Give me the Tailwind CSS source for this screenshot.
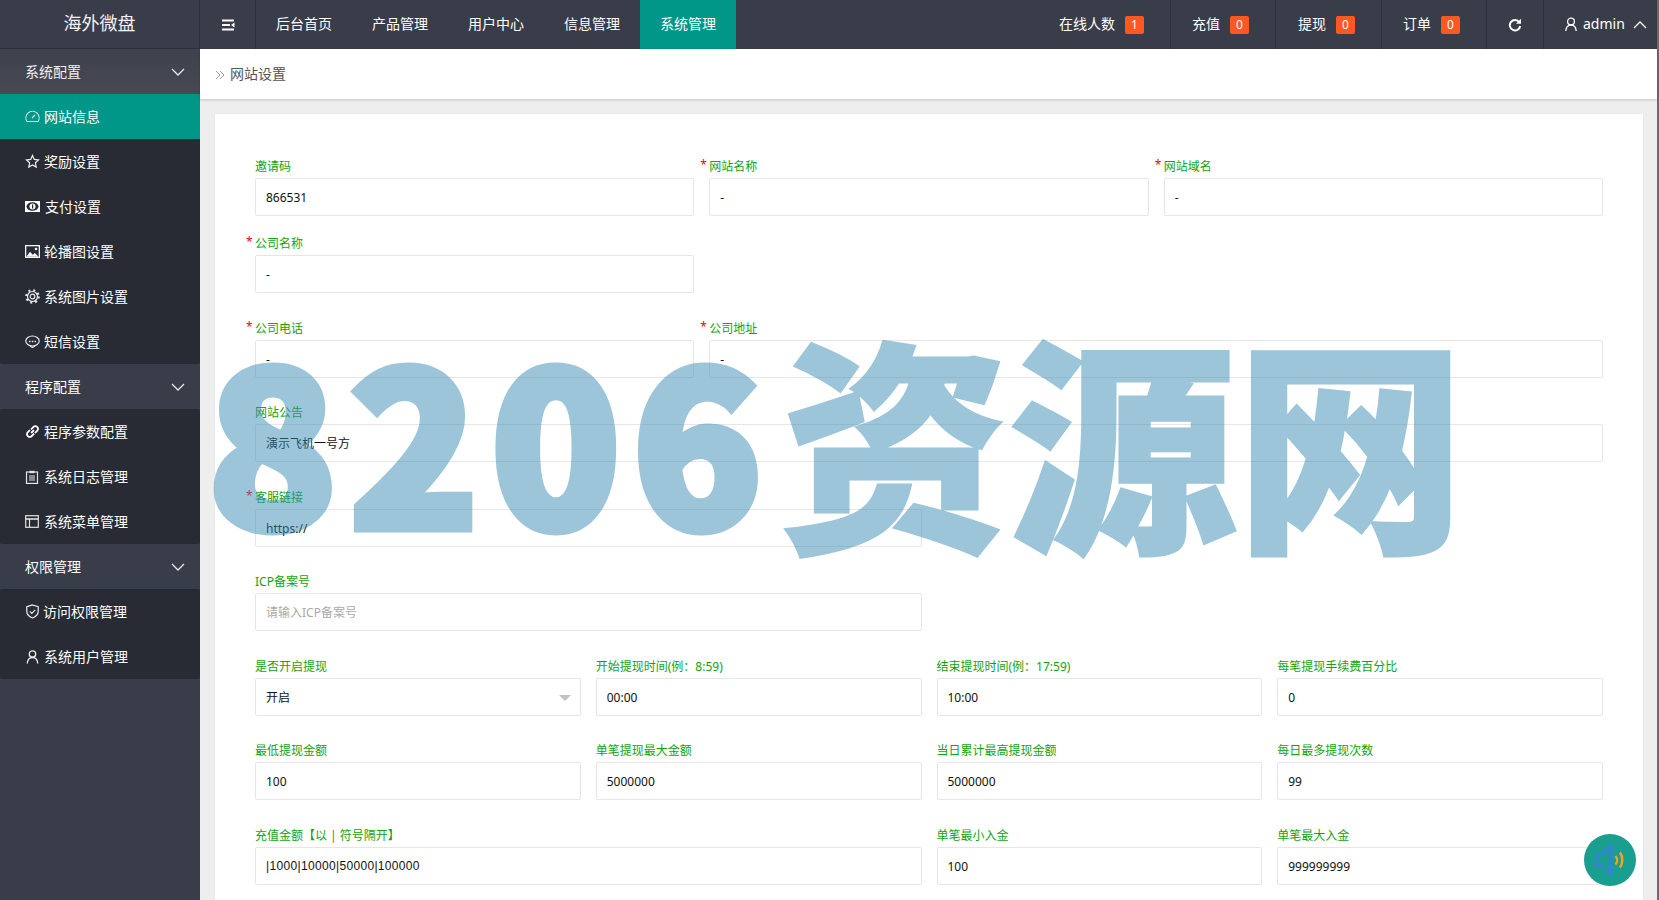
<!DOCTYPE html>
<html lang="zh">
<head>
<meta charset="utf-8">
<title>网站设置</title>
<script src="https://cdn.jsdelivr.net/npm/@tailwindcss/browser@4"></script>
</head>
<body class="m-0 bg-[#eeeeee]">
<div class="relative flex w-[1659px] h-[900px] overflow-hidden font-['Noto_Sans','Noto_Sans_CJK_SC',sans-serif] text-[14px]">
  <div class="flex flex-col w-[1657px] h-full">
    <!-- top bar -->
    <header class="flex h-[49px] shrink-0 bg-[#393d49] text-white">
      <div class="w-[200px] shrink-0 border-r border-b border-[#2e313b] flex items-center justify-center pb-[2px] text-[18px] text-[#f2f2f2]">海外微盘</div>
      <div class="w-[56px] shrink-0 border-r border-[#2e313b] flex items-center justify-center">
        <svg width="14" height="12" viewBox="0 0 14 12" fill="none" stroke="#fff" stroke-width="2"><path d="M1 1.500h12M1 10.500h12M1 6h8"/><path d="M13.500 3.500l-3.500 2.500 3.500 2.500z" stroke="none" fill="#fff"/></svg>
      </div>
      <nav class="flex">
        <a class="w-[96px] flex items-center justify-center pb-[2px]">后台首页</a>
        <a class="w-[96px] flex items-center justify-center pb-[2px]">产品管理</a>
        <a class="w-[96px] flex items-center justify-center pb-[2px]">用户中心</a>
        <a class="w-[96px] flex items-center justify-center pb-[2px]">信息管理</a>
        <a class="w-[96px] flex items-center justify-center pb-[2px] bg-[#009688]">系统管理</a>
      </nav>
      <div class="ml-auto flex">
        <div class="w-[133px] border-r border-[#2e313b] flex items-center pl-[21px] gap-[10px]"><span class="mb-[2px]">在线人数</span><span class="w-[19px] h-[18px] rounded-[2px] bg-[#ff5722] text-[12px] flex items-center justify-center">1</span></div>
        <div class="w-[105px] border-r border-[#2e313b] flex items-center pl-[21px] gap-[10px]"><span class="mb-[2px]">充值</span><span class="w-[19px] h-[18px] rounded-[2px] bg-[#ff5722] text-[12px] flex items-center justify-center">0</span></div>
        <div class="w-[106px] border-r border-[#2e313b] flex items-center pl-[22px] gap-[10px]"><span class="mb-[2px]">提现</span><span class="w-[19px] h-[18px] rounded-[2px] bg-[#ff5722] text-[12px] flex items-center justify-center">0</span></div>
        <div class="w-[105px] border-r border-[#2e313b] flex items-center pl-[21px] gap-[10px]"><span class="mb-[2px]">订单</span><span class="w-[19px] h-[18px] rounded-[2px] bg-[#ff5722] text-[12px] flex items-center justify-center">0</span></div>
        <div class="w-[57px] border-r border-[#2e313b] flex items-center justify-center">
          <svg width="14" height="14" viewBox="0 0 14 14" fill="none"><path d="M11.300 4.200A5.200 5.200 0 1 0 12.200 8" stroke="#fff" stroke-width="2"/><path d="M13 .8v5H8z" fill="#fff"/></svg>
        </div>
        <div class="w-[113px] flex items-center pl-[20px]">
          <svg width="14" height="15" viewBox="0 0 14 15" fill="none" stroke="#fff" stroke-width="1.3"><circle cx="7" cy="4.500" r="3.400"/><path d="M1.800 14c.3-3.600 2.200-6 5.200-6s4.900 2.400 5.200 6"/></svg>
          <span class="ml-[5px] mb-[2px]">admin</span>
          <svg class="ml-[8px]" width="14" height="8" viewBox="0 0 14 8" fill="none" stroke="#fff" stroke-width="1.3"><path d="M1 7l6-6 6 6"/></svg>
        </div>
      </div>
    </header>
    <div class="flex flex-1 min-h-0">
      <!-- sidebar -->
      <aside class="w-[200px] shrink-0 bg-[#393d49] text-white">
        <div class="h-[45px] pl-[25px] pr-[15px] flex items-center justify-between bg-gradient-to-b from-[#3f424e] to-[#464953] text-[#f0f0f0]">系统配置
          <svg width="14" height="8" viewBox="0 0 14 8" fill="none" stroke="#e8e8e8" stroke-width="1.3"><path d="M1 1l6 6 6-6"/></svg>
        </div>
        <div class="bg-[#282b33] rounded-[2px]">
          <div class="h-[45px] pl-[25px] flex items-center gap-[4px] bg-[#009688]">
            <svg width="15" height="13" viewBox="0 0 15 13" fill="none" stroke="#d7eeeb" stroke-width="1.1"><path d="M2 11.500A6.600 6.600 0 1 1 13 11.500z"/><path d="M7 8l3-3" stroke-width="1.300"/></svg>网站信息
          </div>
          <div class="h-[45px] pl-[25px] flex items-center gap-[4px]">
            <svg width="15" height="15" viewBox="0 0 15 15" fill="none" stroke="#f2f2f2" stroke-width="1.200"><path d="M7.500 1.500l1.800 3.900 4.200.5-3.100 2.900.8 4.200-3.700-2.100-3.700 2.100.8-4.200L1.500 5.900l4.200-.5z"/></svg>奖励设置
          </div>
          <div class="h-[45px] pl-[25px] flex items-center gap-[5px]">
            <svg width="15" height="11" viewBox="0 0 15 11"><rect width="15" height="11" fill="#fff"/><ellipse cx="7.500" cy="5.500" rx="6" ry="4.300" fill="#282b33"/><circle cx="7.500" cy="5.500" r="3" fill="#fff"/><rect x="7" y="3.500" width="1.200" height="4" fill="#282b33"/></svg>支付设置
          </div>
          <div class="h-[45px] pl-[25px] flex items-center gap-[4px]">
            <svg width="15" height="13" viewBox="0 0 15 13"><rect width="15" height="13" fill="#f5f5f5"/><rect x="1.300" y="1.300" width="12.400" height="10.400" fill="#282b33"/><path d="M1.300 11.700l3.700-5 2.800 3 2-1.800 3.900 3.800z" fill="#f5f5f5"/><circle cx="11" cy="4" r="1.300" fill="#f5f5f5"/></svg>轮播图设置
          </div>
          <div class="h-[45px] pl-[25px] flex items-center gap-[4px]">
            <svg width="15" height="15" viewBox="0 0 15 15" fill="none" stroke="#e8ecf2"><circle cx="7.500" cy="7.500" r="2.300" stroke-width="1.200"/><circle cx="7.500" cy="7.500" r="5" stroke-width="1.200"/><circle cx="7.500" cy="7.500" r="6.300" stroke-width="2" stroke-dasharray="2 2.950"/></svg>系统图片设置
          </div>
          <div class="h-[45px] pl-[25px] flex items-center gap-[4px]">
            <svg width="15" height="13" viewBox="0 0 15 13" fill="none" stroke="#e8ecf2" stroke-width="1.200"><ellipse cx="7.500" cy="6" rx="6.700" ry="5"/><path d="M5 11l2.500 1.500L10 11"/><path d="M4 6.500h7" stroke-dasharray="1.500 1.300" stroke-width="1.600"/></svg>短信设置
          </div>
        </div>
        <div class="h-[45px] pl-[25px] pr-[15px] flex items-center justify-between">程序配置
          <svg width="14" height="8" viewBox="0 0 14 8" fill="none" stroke="#e8e8e8" stroke-width="1.3"><path d="M1 1l6 6 6-6"/></svg>
        </div>
        <div class="bg-[#282b33] rounded-[2px]">
          <div class="h-[45px] pl-[25px] flex items-center gap-[4px]">
            <svg width="15" height="15" viewBox="0 0 15 15" fill="none" stroke="#fff" stroke-width="1.800"><path d="M6.200 9l2.800-2.900"/><path d="M6 5.500l2.500-2.700a2.700 2.700 0 0 1 3.800 3.800L10 9"/><path d="M9.200 9.700l-2.700 2.500a2.700 2.700 0 0 1-3.800-3.800L5 6"/></svg>程序参数配置
          </div>
          <div class="h-[45px] pl-[25px] flex items-center gap-[5px]">
            <svg width="14" height="14" viewBox="0 0 14 14" fill="none" stroke="#dfe6ee" stroke-width="1.200"><rect x="1.500" y="2" width="11" height="11.400"/><rect x="4.500" y=".8" width="5" height="2.400" fill="#dfe6ee" stroke="none"/><path d="M4 6h6M4 8h6M4 10h6"/></svg>系统日志管理
          </div>
          <div class="h-[45px] pl-[25px] flex items-center gap-[5px]">
            <svg width="14" height="13" viewBox="0 0 14 13" fill="none" stroke="#e2e2e2" stroke-width="1.200"><rect x=".7" y=".7" width="12.600" height="11.600"/><path d="M.7 4h12.600" stroke-width="1.600"/><path d="M4.500 4v8"/></svg>系统菜单管理
          </div>
        </div>
        <div class="h-[45px] pl-[25px] pr-[15px] flex items-center justify-between">权限管理
          <svg width="14" height="8" viewBox="0 0 14 8" fill="none" stroke="#e8e8e8" stroke-width="1.3"><path d="M1 1l6 6 6-6"/></svg>
        </div>
        <div class="bg-[#282b33] rounded-[2px]">
          <div class="h-[45px] pl-[25px] flex items-center gap-[3px]">
            <svg width="15" height="15" viewBox="0 0 15 15" fill="none" stroke="#eef2f5" stroke-width="1.200"><path d="M7.500 1l5.700 1.800v4.500c0 3.300-2.600 5.500-5.700 6.700-3.100-1.200-5.700-3.400-5.700-6.700V2.800z"/><path d="M4.800 7.300l2 2 3.500-3.500"/></svg>访问权限管理
          </div>
          <div class="h-[45px] pl-[26px] flex items-center gap-[5px]">
            <svg width="13" height="14" viewBox="0 0 13 14" fill="none" stroke="#eef2f5" stroke-width="1.300"><circle cx="6.500" cy="4" r="3.200"/><path d="M1.200 13.500c.3-3.600 2.300-6 5.300-6s5 2.400 5.300 6"/></svg>系统用户管理
          </div>
        </div>
      </aside>
      <!-- main -->
      <main class="flex-1 min-w-0 flex flex-col">
        <div class="relative h-[50px] shrink-0 bg-white shadow-[0_1px_3px_rgba(0,0,0,0.18)] flex items-center pl-[15px] text-[#555]">
          <span class="mb-[1px] flex items-center gap-[5px]">
            <svg class="mt-[2px]" width="10" height="10" viewBox="0 0 10 10" fill="none" stroke="#999" stroke-width="1"><path d="M1 1l4 4-4 4M5 1l4 4-4 4"/></svg>网站设置
          </span>
        </div>
        <div class="flex-1 min-h-0 pt-[15px] pl-[15px] pr-[14px]">
          <section class="h-full bg-white shadow-[0_0_2px_rgba(0,0,0,0.06)] px-[40px] pt-[43px] text-[12px]">
            <div class="grid grid-cols-12 gap-x-[15px] mb-[18px]">
              <div class="col-span-4"><label class="block relative h-[21px] leading-[19px] text-[#0fa50f]">邀请码</label><input value="866531" class="block w-full h-[38px] border border-[#e6e6e6] rounded-[2px] pl-[10px] text-[#111] outline-none"></div>
              <div class="col-span-4"><label class="block relative h-[21px] leading-[19px] text-[#0fa50f]"><i class="absolute left-[-9px] top-[-2px] not-italic text-[#f00]">*</i>网站名称</label><input value="-" class="block w-full h-[38px] border border-[#e6e6e6] rounded-[2px] pl-[10px] text-[#111] outline-none"></div>
              <div class="col-span-4"><label class="block relative h-[21px] leading-[19px] text-[#0fa50f]"><i class="absolute left-[-9px] top-[-2px] not-italic text-[#f00]">*</i>网站域名</label><input value="-" class="block w-full h-[38px] border border-[#e6e6e6] rounded-[2px] pl-[10px] text-[#111] outline-none"></div>
            </div>
            <div class="grid grid-cols-12 gap-x-[15px] mb-[26px]">
              <div class="col-span-4"><label class="block relative h-[21px] leading-[19px] text-[#0fa50f]"><i class="absolute left-[-9px] top-[-2px] not-italic text-[#f00]">*</i>公司名称</label><input value="-" class="block w-full h-[38px] border border-[#e6e6e6] rounded-[2px] pl-[10px] text-[#111] outline-none"></div>
            </div>
            <div class="grid grid-cols-12 gap-x-[15px] mb-[25px]">
              <div class="col-span-4"><label class="block relative h-[21px] leading-[19px] text-[#0fa50f]"><i class="absolute left-[-9px] top-[-2px] not-italic text-[#f00]">*</i>公司电话</label><input value="-" class="block w-full h-[38px] border border-[#e6e6e6] rounded-[2px] pl-[10px] text-[#111] outline-none"></div>
              <div class="col-span-8"><label class="block relative h-[21px] leading-[19px] text-[#0fa50f]"><i class="absolute left-[-9px] top-[-2px] not-italic text-[#f00]">*</i>公司地址</label><input value="-" class="block w-full h-[38px] border border-[#e6e6e6] rounded-[2px] pl-[10px] text-[#111] outline-none"></div>
            </div>
            <div class="grid grid-cols-12 gap-x-[15px] mb-[26px]">
              <div class="col-span-12"><label class="block relative h-[21px] leading-[19px] text-[#0fa50f]">网站公告</label><input value="演示飞机一号方" class="block w-full h-[38px] border border-[#e6e6e6] rounded-[2px] pl-[10px] text-[#111] outline-none"></div>
            </div>
            <div class="grid grid-cols-12 gap-x-[15px] mb-[25px]">
              <div class="col-span-6"><label class="block relative h-[21px] leading-[19px] text-[#0fa50f]"><i class="absolute left-[-9px] top-[-2px] not-italic text-[#f00]">*</i>客服链接</label><input value="https://" class="block w-full h-[38px] border border-[#e6e6e6] rounded-[2px] pl-[10px] text-[#111] outline-none"></div>
            </div>
            <div class="grid grid-cols-12 gap-x-[15px] mb-[26px]">
              <div class="col-span-6"><label class="block relative h-[21px] leading-[19px] text-[#0fa50f]">ICP备案号</label><input placeholder="请输入ICP备案号" class="block w-full h-[38px] border border-[#e6e6e6] rounded-[2px] pl-[10px] text-[#111] outline-none placeholder:text-[#aaa]"></div>
            </div>
            <div class="grid grid-cols-12 gap-x-[15px] mb-[25px]">
              <div class="col-span-3"><label class="block relative h-[21px] leading-[19px] text-[#0fa50f]">是否开启提现</label><div class="relative"><input value="开启" class="block w-full h-[38px] border border-[#e6e6e6] rounded-[2px] pl-[10px] text-[#111] outline-none"><span class="absolute right-[10px] top-[17px] w-0 h-0 border-x-[6px] border-x-transparent border-t-[6px] border-t-[#c2c2c2]"></span></div></div>
              <div class="col-span-3"><label class="block relative h-[21px] leading-[19px] text-[#0fa50f]">开始提现时间(例：8:59)</label><input value="00:00" class="block w-full h-[38px] border border-[#e6e6e6] rounded-[2px] pl-[10px] text-[#111] outline-none"></div>
              <div class="col-span-3"><label class="block relative h-[21px] leading-[19px] text-[#0fa50f]">结束提现时间(例：17:59)</label><input value="10:00" class="block w-full h-[38px] border border-[#e6e6e6] rounded-[2px] pl-[10px] text-[#111] outline-none"></div>
              <div class="col-span-3"><label class="block relative h-[21px] leading-[19px] text-[#0fa50f]">每笔提现手续费百分比</label><input value="0" class="block w-full h-[38px] border border-[#e6e6e6] rounded-[2px] pl-[10px] text-[#111] outline-none"></div>
            </div>
            <div class="grid grid-cols-12 gap-x-[15px] mb-[26px]">
              <div class="col-span-3"><label class="block relative h-[21px] leading-[19px] text-[#0fa50f]">最低提现金额</label><input value="100" class="block w-full h-[38px] border border-[#e6e6e6] rounded-[2px] pl-[10px] text-[#111] outline-none"></div>
              <div class="col-span-3"><label class="block relative h-[21px] leading-[19px] text-[#0fa50f]">单笔提现最大金额</label><input value="5000000" class="block w-full h-[38px] border border-[#e6e6e6] rounded-[2px] pl-[10px] text-[#111] outline-none"></div>
              <div class="col-span-3"><label class="block relative h-[21px] leading-[19px] text-[#0fa50f]">当日累计最高提现金额</label><input value="5000000" class="block w-full h-[38px] border border-[#e6e6e6] rounded-[2px] pl-[10px] text-[#111] outline-none"></div>
              <div class="col-span-3"><label class="block relative h-[21px] leading-[19px] text-[#0fa50f]">每日最多提现次数</label><input value="99" class="block w-full h-[38px] border border-[#e6e6e6] rounded-[2px] pl-[10px] text-[#111] outline-none"></div>
            </div>
            <div class="grid grid-cols-12 gap-x-[15px]">
              <div class="col-span-6"><label class="block relative h-[21px] leading-[19px] text-[#0fa50f]">充值金额【以 | 符号隔开】</label><input value="|1000|10000|50000|100000" class="block w-full h-[38px] border border-[#e6e6e6] rounded-[2px] pl-[10px] text-[#111] outline-none font-['Liberation_Sans',sans-serif] tracking-[0.33px]"></div>
              <div class="col-span-3"><label class="block relative h-[21px] leading-[19px] text-[#0fa50f]">单笔最小入金</label><input value="100" class="block w-full h-[38px] border border-[#e6e6e6] rounded-[2px] pl-[10px] text-[#111] outline-none"></div>
              <div class="col-span-3"><label class="block relative h-[21px] leading-[19px] text-[#0fa50f]">单笔最大入金</label><input value="999999999" class="block w-full h-[38px] border border-[#e6e6e6] rounded-[2px] pl-[10px] text-[#111] outline-none"></div>
            </div>
          </section>
        </div>
      </main>
    </div>
  </div>
  <div class="w-[2px] h-full bg-[#6b6b6b]"></div>

  <!-- floating sound button -->
  <div class="absolute left-[1584px] top-[834px] w-[52px] h-[52px] rounded-full bg-[#1a9e8f] flex items-center justify-center">
    <svg width="34" height="34" viewBox="0 0 34 34" fill="none"><path d="M18 2.500L8 12H3v10h5l10 9.500z" stroke="#3b7de8" stroke-width="2.200" fill="none" stroke-linejoin="round"/><path d="M18 2.500v29" stroke="#3b7de8" stroke-width="2.500"/><path d="M22.500 13c2 2.500 2 6 0 8.500" stroke="#f2a31b" stroke-width="2.200"/><path d="M27 9.500c3 4.300 3 10.500 0 15" stroke="#f2a31b" stroke-width="2.500"/></svg>
  </div>
  <!-- watermark -->
  <div class="absolute left-[208px] top-[266px] pointer-events-none whitespace-nowrap leading-[340px] font-black opacity-50 text-[rgb(59,141,181)] font-['Noto_Sans_CJK_SC',sans-serif]"><span class="inline-block -translate-y-[7px] text-[212px] tracking-[12.5px] [-webkit-text-stroke:9px_rgb(59,141,181)]">8206</span><span class="ml-[6px] text-[228px] [-webkit-text-stroke:3px_rgb(59,141,181)]">资源网</span></div>
</div>
</body>
</html>
